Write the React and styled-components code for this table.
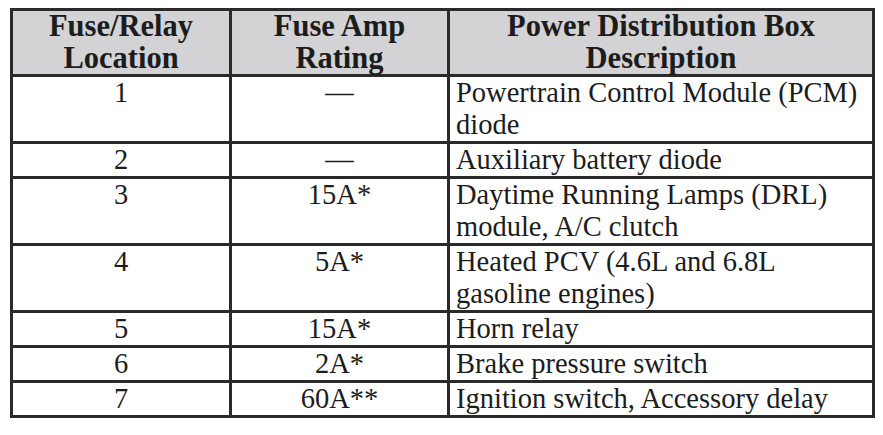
import React from "react";
import styled, { createGlobalStyle } from "styled-components";

const GlobalStyle = createGlobalStyle`
  html, body {
    margin: 0;
    padding: 0;
    background: #ffffff;
  }
`;

const Page = styled.div`
  padding: 8px 0 0 10px;
  width: 883px;
  height: 435px;
  box-sizing: border-box;
`;

const Table = styled.table`
  border-collapse: collapse;
  table-layout: fixed;
  width: 862px;
  font-family: "Liberation Serif", "Times New Roman", serif;
  color: #1c1c1c;
`;

const HeadCell = styled.th`
  background: #d3d3d5;
  border: 3px solid #2a2a2a;
  font-size: 30.5px;
  font-weight: bold;
  line-height: 31.5px;
  padding: 0 4px;
  text-align: center;
  vertical-align: middle;
`;

const Cell = styled.td`
  border: 3px solid #2a2a2a;
  font-size: 28.5px;
  line-height: 32px;
  padding: 0 ${(p) => (p.$center ? "4px" : "6px")};
  text-align: ${(p) => (p.$center ? "center" : "left")};
  vertical-align: top;
  white-space: pre-line;
`;

const rows = [
  { loc: "1", amp: "—", desc: "Powertrain Control Module (PCM)\ndiode" },
  { loc: "2", amp: "—", desc: "Auxiliary battery diode" },
  { loc: "3", amp: "15A*", desc: "Daytime Running Lamps (DRL)\nmodule, A/C clutch" },
  { loc: "4", amp: "5A*", desc: "Heated PCV (4.6L and 6.8L\ngasoline engines)" },
  { loc: "5", amp: "15A*", desc: "Horn relay" },
  { loc: "6", amp: "2A*", desc: "Brake pressure switch" },
  { loc: "7", amp: "60A**", desc: "Ignition switch, Accessory delay" },
];

export default function App() {
  return (
    <Page>
      <GlobalStyle />
      <Table>
        <colgroup>
          <col style={{ width: "219px" }} />
          <col style={{ width: "218px" }} />
          <col style={{ width: "425px" }} />
        </colgroup>
        <thead>
          <tr>
            <HeadCell>Fuse/Relay<br />Location</HeadCell>
            <HeadCell>Fuse Amp<br />Rating</HeadCell>
            <HeadCell>Power Distribution Box<br />Description</HeadCell>
          </tr>
        </thead>
        <tbody>
          {rows.map((r) => (
            <tr key={r.loc}>
              <Cell $center>{r.loc}</Cell>
              <Cell $center>{r.amp}</Cell>
              <Cell>{r.desc}</Cell>
            </tr>
          ))}
        </tbody>
      </Table>
    </Page>
  );
}
